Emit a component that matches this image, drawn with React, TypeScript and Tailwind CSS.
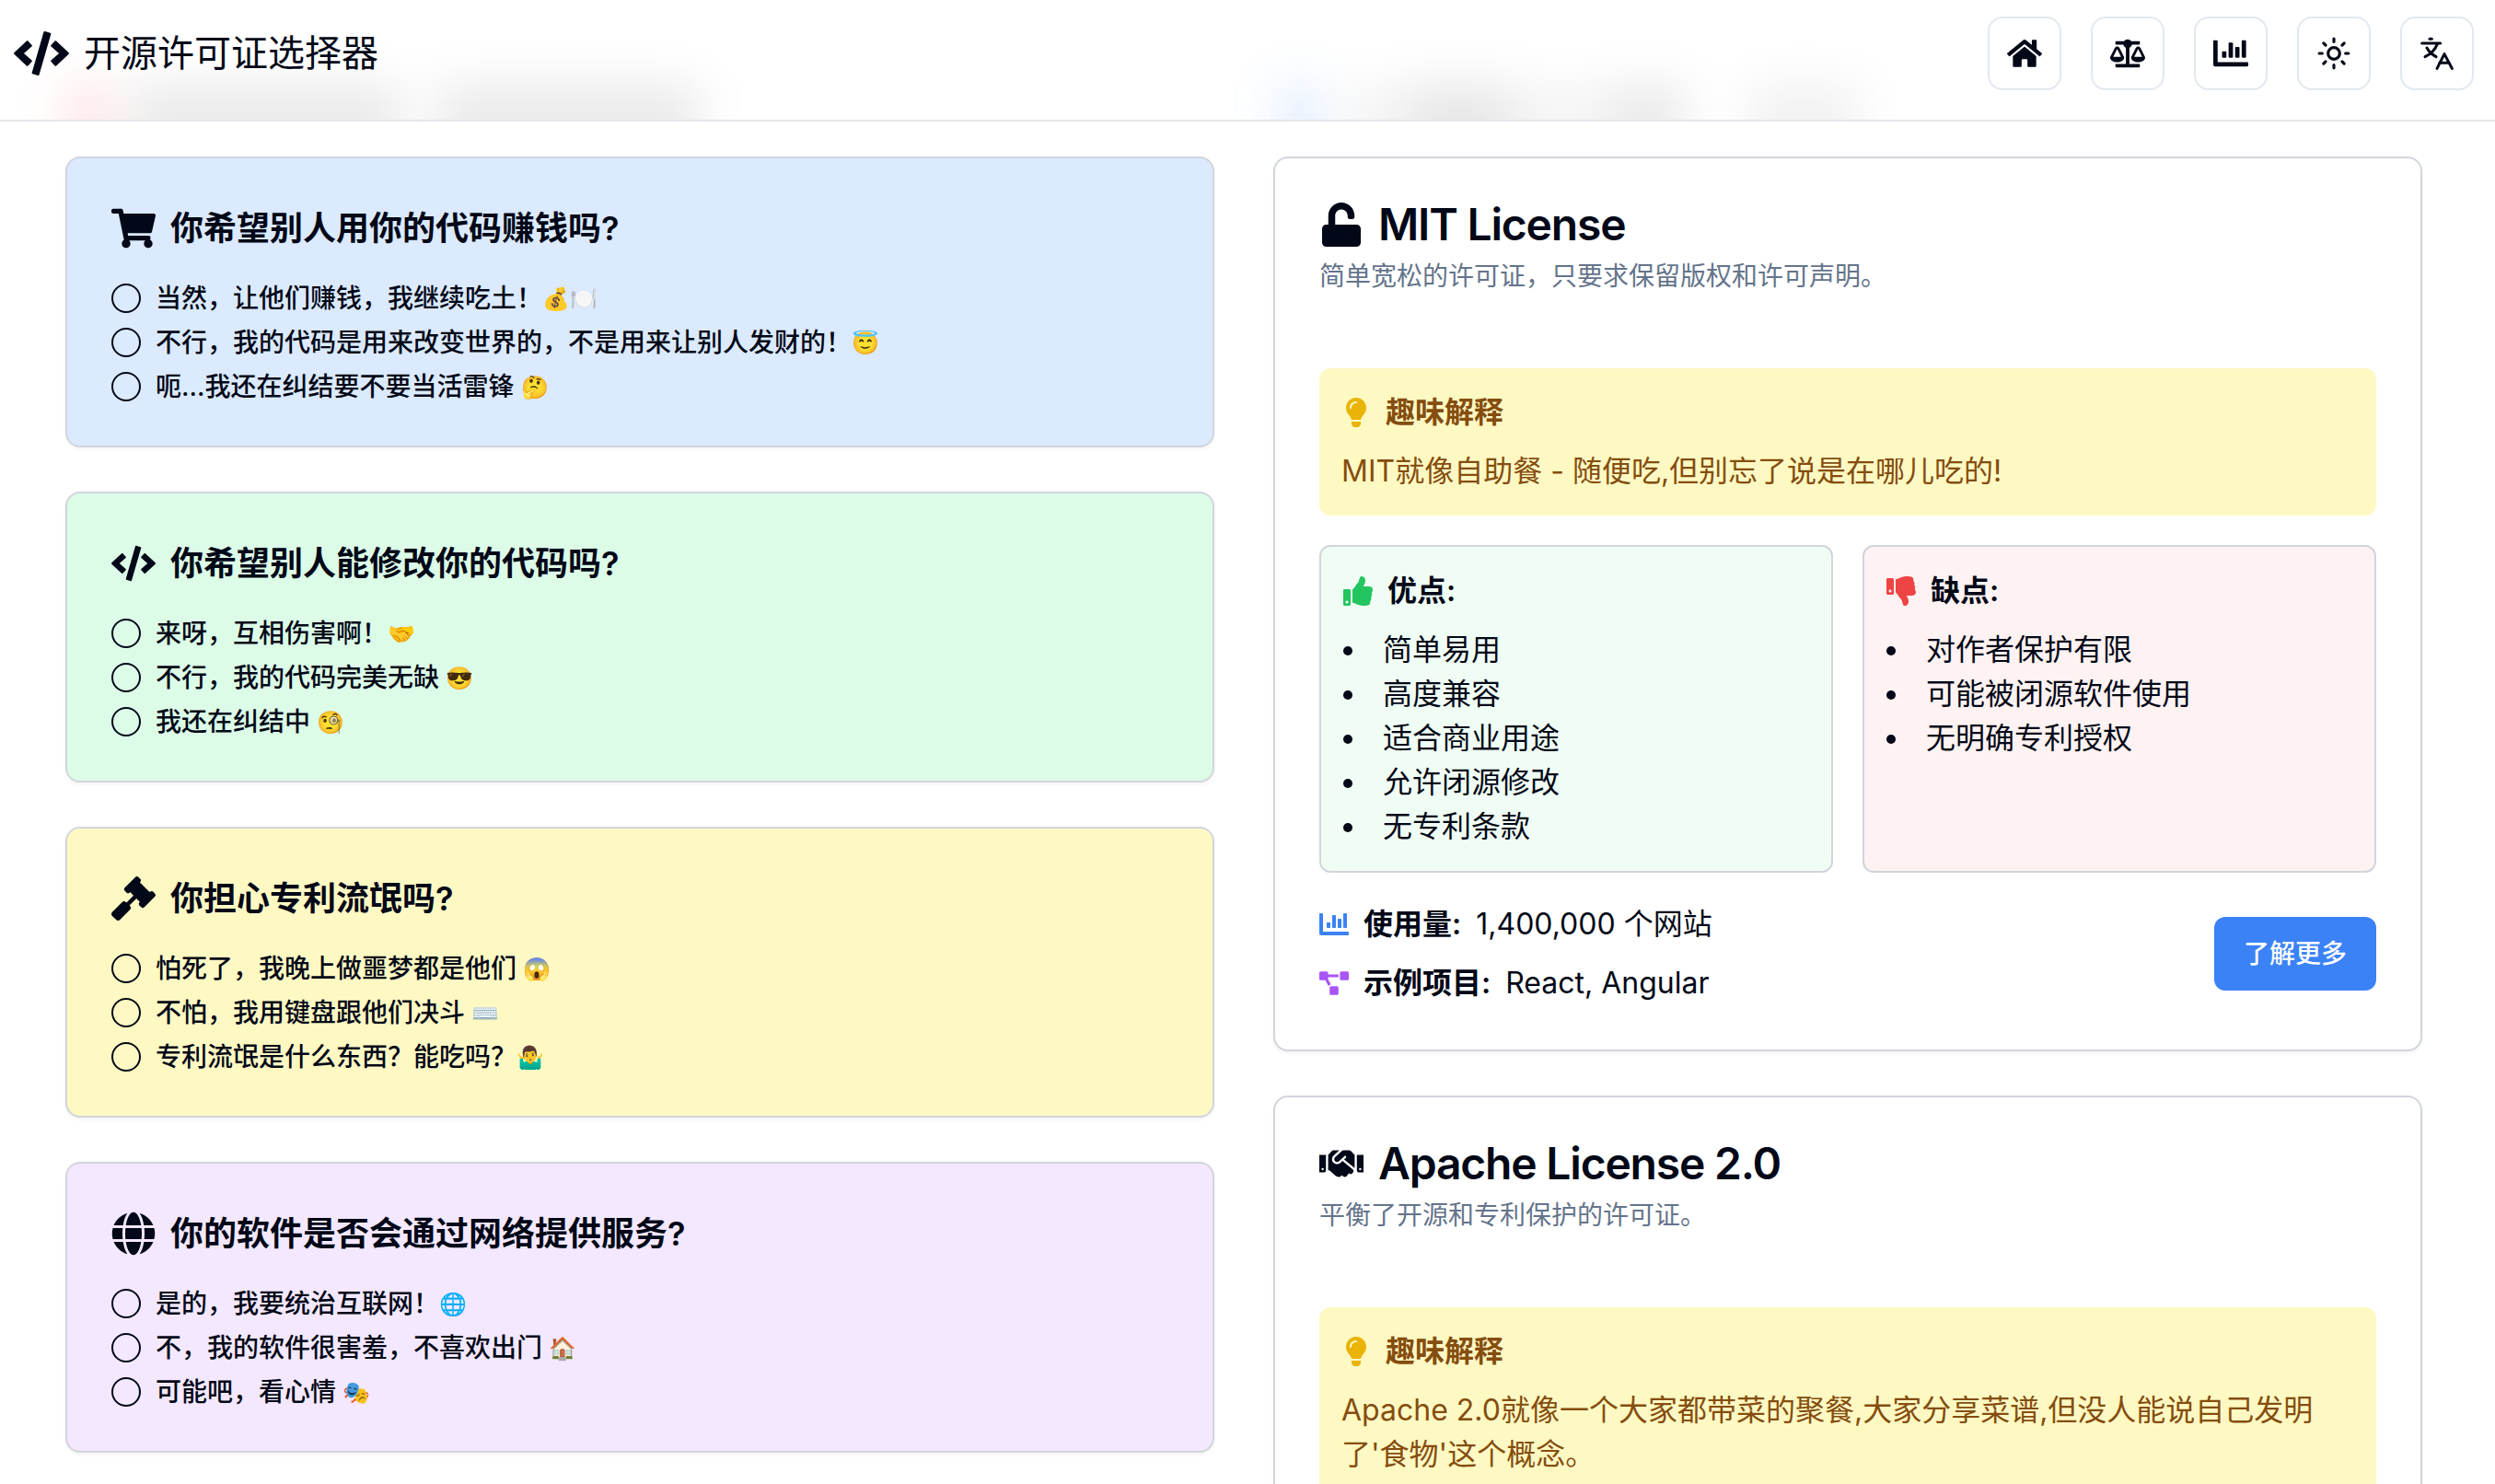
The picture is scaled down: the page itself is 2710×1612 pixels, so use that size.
import type { ReactNode } from "react";
import {
  FaBalanceScale,
  FaChartBar,
  FaCode,
  FaGavel,
  FaGlobe,
  FaHandshake,
  FaHome,
  FaLightbulb,
  FaProjectDiagram,
  FaShoppingCart,
  FaThumbsDown,
  FaThumbsUp,
  FaUnlock,
} from "react-icons/fa";
import { Sun } from "lucide-react";

type Question = {
  id: string;
  title: string;
  color: string;
  icon: ReactNode;
  options: { text: string; emoji: string }[];
};

const questions: Question[] = [
  {
    id: "commercial",
    title: "你希望别人用你的代码赚钱吗?",
    color: "bg-[#dbeafe]",
    icon: <FaShoppingCart className="size-12" />,
    options: [
      { text: "当然，让他们赚钱，我继续吃土！", emoji: "💰🍽️" },
      { text: "不行，我的代码是用来改变世界的，不是用来让别人发财的！", emoji: "😇" },
      { text: "呃...我还在纠结要不要当活雷锋 ", emoji: "🤔" },
    ],
  },
  {
    id: "modify",
    title: "你希望别人能修改你的代码吗?",
    color: "bg-[#dcfce7]",
    icon: <FaCode className="size-12" />,
    options: [
      { text: "来呀，互相伤害啊！", emoji: "🤝" },
      { text: "不行，我的代码完美无缺 ", emoji: "😎" },
      { text: "我还在纠结中 ", emoji: "🧐" },
    ],
  },
  {
    id: "patent",
    title: "你担心专利流氓吗?",
    color: "bg-[#fef9c3]",
    icon: <FaGavel className="size-12" />,
    options: [
      { text: "怕死了，我晚上做噩梦都是他们 ", emoji: "😱" },
      { text: "不怕，我用键盘跟他们决斗 ", emoji: "⌨️" },
      { text: "专利流氓是什么东西？能吃吗？", emoji: "🤷‍♂️" },
    ],
  },
  {
    id: "network",
    title: "你的软件是否会通过网络提供服务?",
    color: "bg-[#f3e8ff]",
    icon: <FaGlobe className="size-12" />,
    options: [
      { text: "是的，我要统治互联网！", emoji: "🌐" },
      { text: "不，我的软件很害羞，不喜欢出门 ", emoji: "🏠" },
      { text: "可能吧，看心情 ", emoji: "🎭" },
    ],
  },
];

function TranslateIcon() {
  return (
    <svg
      viewBox="0 0 120 120"
      className="size-10"
      fill="none"
      stroke="currentColor"
      strokeWidth="9"
      strokeLinecap="round"
      strokeLinejoin="round"
      aria-hidden="true"
    >
      <path d="M36 13h7" />
      <path d="M11 27h60" />
      <path d="M61 29c-5 14-18 31-40 42" />
      <path d="M27 42c7 13 17 22 30 29" />
      <path d="M60 109l24-47 25 47" />
      <path d="M69 91h30" />
    </svg>
  );
}

function NavButton({ label, children }: { label: string; children: ReactNode }) {
  return (
    <button
      type="button"
      aria-label={label}
      className="flex size-20 items-center justify-center rounded-2xl border-2 border-[#e2e8f0] bg-white"
    >
      {children}
    </button>
  );
}

function Header() {
  return (
    <header className="relative shrink-0 overflow-hidden border-b-2 border-gray-200 bg-white">
      <div aria-hidden="true" className="absolute inset-x-0 top-[90px] h-32 blur-[24px]">
        <div className="absolute left-[71px] h-full w-12 bg-red-500/12" />
        <div className="absolute left-[140px] h-full w-[296px] bg-black/8" />
        <div className="absolute left-[474px] h-full w-[286px] bg-black/8" />
        <div className="absolute left-[1387px] h-full w-12 bg-blue-500/12" />
        <div className="absolute left-[1460px] h-full w-[70px] bg-black/4" />
        <div className="absolute left-[1530px] h-full w-[110px] bg-black/9" />
        <div className="absolute left-[1640px] h-full w-[110px] bg-black/4" />
        <div className="absolute left-[1750px] h-full w-[80px] bg-black/8" />
        <div className="absolute left-[1900px] h-full w-[120px] bg-black/5" />
      </div>
      <div className="relative flex items-center justify-between pt-[18px] pr-[23px] pb-8 pl-[15px]">
        <a href="#" className="flex items-center gap-4">
          <FaCode className="size-[60px]" />
          <span className="text-[40px] leading-[56px]">开源许可证选择器</span>
        </a>
        <nav className="flex items-center gap-8">
          <NavButton label="首页">
            <FaHome className="size-[38px]" />
          </NavButton>
          <NavButton label="许可证对比">
            <FaBalanceScale className="size-[38px]" />
          </NavButton>
          <NavButton label="统计">
            <FaChartBar className="size-[38px]" />
          </NavButton>
          <NavButton label="切换主题">
            <Sun className="size-[38px]" />
          </NavButton>
          <NavButton label="切换语言">
            <TranslateIcon />
          </NavButton>
        </nav>
      </div>
    </header>
  );
}

function QuestionCard({ q }: { q: Question }) {
  return (
    <section className={`rounded-2xl border-2 border-gray-300 p-12 shadow-[0_2px_4px_rgb(0_0_0/0.05)] ${q.color}`}>
      <h3 className="flex items-center gap-4 text-4xl leading-[56px] font-semibold">
        {q.icon}
        <span>{q.title}</span>
      </h3>
      <div role="radiogroup" aria-label={q.title} className="mt-8 flex flex-col gap-4">
        {q.options.map((option) => (
          <label key={option.text} className="flex h-8 items-center gap-4 text-[28px] leading-8 font-medium">
            <input
              type="radio"
              name={q.id}
              className="size-8 shrink-0 appearance-none rounded-full border-2 border-[#020817]"
            />
            <span className="whitespace-pre">
              {option.text}
              <span className="align-[1px] text-2xl leading-none">{option.emoji}</span>
            </span>
          </label>
        ))}
      </div>
    </section>
  );
}

function LicenseCard({
  icon,
  name,
  description,
  fun,
  children,
}: {
  icon: ReactNode;
  name: string;
  description: string;
  fun: string;
  children?: ReactNode;
}) {
  return (
    <article className="rounded-2xl border-2 border-gray-300 bg-white p-12 shadow-[0_2px_4px_rgb(0_0_0/0.05)]">
      <h2 className="flex items-center gap-4 text-5xl leading-none font-semibold tracking-tight">
        {icon}
        <span>{name}</span>
      </h2>
      <p className="mt-3 text-[28px] leading-10 text-[#64748b]">{description}</p>
      <div className="mt-20 rounded-xl bg-[#fef9c3] p-6 text-[#854d0e]">
        <h3 className="mb-4 flex items-center gap-4 font-semibold">
          <FaLightbulb className="size-8 text-[#eab308]" />
          <span>趣味解释</span>
        </h3>
        <p>{fun}</p>
      </div>
      {children}
    </article>
  );
}

function PointList({
  icon,
  title,
  color,
  items,
}: {
  icon: ReactNode;
  title: string;
  color: string;
  items: string[];
}) {
  return (
    <div className={`rounded-xl border-2 border-gray-300 p-6 ${color}`}>
      <h4 className="mb-4 flex items-center gap-4 font-semibold">
        {icon}
        <span>{title}</span>
      </h4>
      <ul className="list-inside list-disc">
        {items.map((item) => (
          <li key={item}>{item}</li>
        ))}
      </ul>
    </div>
  );
}

function Stat({ icon, label, value }: { icon: ReactNode; label: string; value: string }) {
  return (
    <p className="flex items-center gap-4">
      {icon}
      <strong className="font-semibold">{label}</strong>
      <span>{value}</span>
    </p>
  );
}

export default function App() {
  return (
    <div className="flex h-screen flex-col overflow-hidden bg-white font-['Inter','Noto_Sans_CJK_SC',sans-serif] text-[32px] leading-[48px] text-[#020817]">
      <Header />
      <main className="pt-[38px] pr-2">
        <div className="mx-auto grid max-w-[2560px] grid-cols-2 items-start gap-16">
          <div className="flex flex-col gap-12">
            {questions.map((q) => (
              <QuestionCard key={q.id} q={q} />
            ))}
          </div>
          <div className="flex flex-col gap-12">
            <LicenseCard
              icon={<FaUnlock className="size-12" />}
              name="MIT License"
              description="简单宽松的许可证，只要求保留版权和许可声明。"
              fun="MIT就像自助餐 - 随便吃,但别忘了说是在哪儿吃的!"
            >
              <div className="mt-8 grid grid-cols-2 gap-8">
                <PointList
                  icon={<FaThumbsUp className="size-8 text-[#22c55e]" />}
                  title="优点:"
                  color="bg-[#f0fdf4]"
                  items={["简单易用", "高度兼容", "适合商业用途", "允许闭源修改", "无专利条款"]}
                />
                <PointList
                  icon={<FaThumbsDown className="size-8 text-[#ef4444]" />}
                  title="缺点:"
                  color="bg-[#fef2f2]"
                  items={["对作者保护有限", "可能被闭源软件使用", "无明确专利授权"]}
                />
              </div>
              <div className="mt-8 flex items-center justify-between">
                <div className="flex flex-col gap-4">
                  <Stat
                    icon={<FaChartBar className="size-8 text-[#3b82f6]" />}
                    label="使用量:"
                    value="1,400,000 个网站"
                  />
                  <Stat
                    icon={<FaProjectDiagram className="size-8 text-[#a855f7]" />}
                    label="示例项目:"
                    value="React, Angular"
                  />
                </div>
                <button
                  type="button"
                  className="h-20 rounded-xl bg-[#3b82f6] px-8 text-[28px] leading-10 font-medium text-white"
                >
                  了解更多
                </button>
              </div>
            </LicenseCard>
            <LicenseCard
              icon={<FaHandshake className="size-12" />}
              name="Apache License 2.0"
              description="平衡了开源和专利保护的许可证。"
              fun="Apache 2.0就像一个大家都带菜的聚餐,大家分享菜谱,但没人能说自己发明了'食物'这个概念。"
            />
          </div>
        </div>
      </main>
    </div>
  );
}
